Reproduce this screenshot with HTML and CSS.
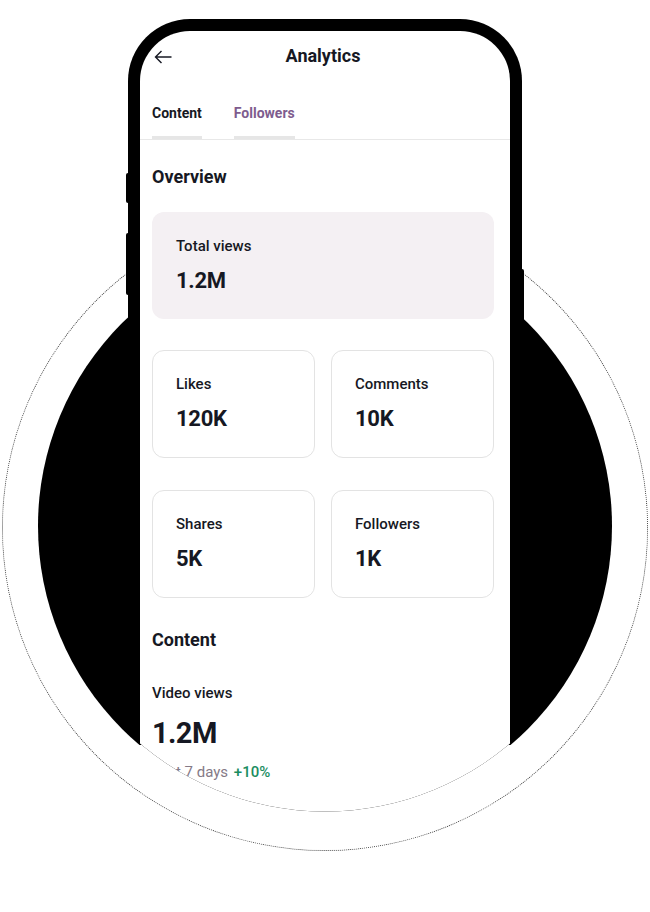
FILE: index.html
```html
<!DOCTYPE html>
<html lang="en">

<head>
    <meta charset="UTF-8">
    <meta name="viewport" content="width=device-width, initial-scale=1.0">
    <title>Analytics</title>
    <link rel="stylesheet" href="styles.css">
</head>

<body>
    <div class="stage">
        <div class="ring"></div>
        <div class="disc"></div>

        <div class="phone">
            <span class="key key-mute"></span>
            <span class="key key-volume"></span>
            <span class="key key-power"></span>

            <div class="screen">
                <div class="topbar">
                    <svg class="back" width="18" height="14" viewBox="0 0 18 14">
                        <path d="M17.5 7H1.5M7.5 1L1.5 7l6 6" fill="none" stroke="#161823" stroke-width="1.4" />
                    </svg>
                    <h1>Analytics</h1>
                </div>

                <div class="tabs">
                    <div class="tab active">Content</div>
                    <div class="tab">Followers</div>
                </div>

                <div class="body">
                    <h2>Overview</h2>

                    <div class="card card-main">
                        <div class="label">Total views</div>
                        <div class="value">1.2M</div>
                    </div>

                    <div class="grid">
                        <div class="card">
                            <div class="label">Likes</div>
                            <div class="value">120K</div>
                        </div>
                        <div class="card">
                            <div class="label">Comments</div>
                            <div class="value">10K</div>
                        </div>
                        <div class="card">
                            <div class="label">Shares</div>
                            <div class="value">5K</div>
                        </div>
                        <div class="card">
                            <div class="label">Followers</div>
                            <div class="value">1K</div>
                        </div>
                    </div>

                    <h2 class="section">Content</h2>
                    <div class="label views">Video views</div>
                    <div class="big">1.2M</div>
                    <div class="trend">Last 7 days <span class="up">+10%</span></div>
                </div>
            </div>
        </div>
    </div>
</body>
</html>
```

FILE: styles.css
```css
* {
    margin: 0;
    padding: 0;
    box-sizing: border-box;
}

body {
    background: #fff;
    font-family: Roboto, "Liberation Sans", sans-serif;
    color: #161823;
}

.stage {
    position: relative;
    width: 650px;
    height: 912px;
    padding: 19px 0 0 128px;
    overflow: hidden;
}

/* decorative circles behind the phone */
.ring {
    position: absolute;
    left: 2px;
    top: 205px;
    width: 646px;
    height: 646px;
    border: 1px dotted #444;
    border-radius: 50%;
}

.disc {
    position: absolute;
    left: 38px;
    top: 239px;
    width: 574px;
    height: 574px;
    border-radius: 50%;
    background: #000;
    clip-path: inset(0 0 68px 0);
}

/* phone: top half shown whole, lower half cut by the disc circle */
.phone {
    position: relative;
    width: 394px;
    height: 820px;
    padding: 12px;
    border-radius: 62px;
    background: #000;
    clip-path: path("M -100 -20 H 500 V 507 H 482.5 A 285.5 285.5 0 0 1 -88.5 507 H -100 Z");
}

.key {
    position: absolute;
    background: #000;
}

.key-mute {
    left: -2px;
    top: 154px;
    width: 4px;
    height: 30px;
    border-radius: 2px 0 0 2px;
}

.key-volume {
    left: -2px;
    top: 214px;
    width: 4px;
    height: 62px;
    border-radius: 2px 0 0 2px;
}

.key-power {
    right: -2px;
    top: 250px;
    width: 4px;
    height: 80px;
    border-radius: 0 2px 2px 0;
}

.screen {
    height: 100%;
    background: #fff;
    border-radius: 50px;
    overflow: hidden;
}

.topbar {
    position: relative;
    height: 50px;
    display: flex;
    align-items: center;
    justify-content: center;
}

.back {
    position: absolute;
    left: 14px;
    top: 19px;
}

.topbar h1 {
    font-size: 18px;
    font-weight: 700;
    line-height: 24px;
    margin-left: -4px;
}

.tabs {
    display: flex;
    gap: 32px;
    padding-left: 12px;
    border-bottom: 1px solid #e8e8e8;
}

.tab {
    padding-top: 23px;
    padding-bottom: 14px;
    font-size: 14px;
    font-weight: 700;
    line-height: 18px;
    color: #7e5c8e;
    border-bottom: 3px solid #e6e6e6;
}

.tab.active {
    color: #161823;
}

.body {
    padding: 0 16px 0 12px;
}

h2 {
    margin-top: 26px;
    font-size: 18px;
    font-weight: 700;
    line-height: 22px;
}

h2.section {
    margin-top: 31px;
}

.card {
    padding: 23px 23px 24px;
    border: 1px solid #e3e3e3;
    border-radius: 12px;
}

.card-main {
    margin-top: 24px;
    padding: 24px;
    border: 0;
    background: #f4f0f3;
}

.label {
    font-size: 15px;
    font-weight: 500;
    line-height: 20px;
}

.value {
    margin-top: 11px;
    font-size: 22px;
    font-weight: 700;
    line-height: 28px;
    letter-spacing: -0.3px;
}

.grid {
    margin-top: 31px;
    display: grid;
    grid-template-columns: 1fr 1fr;
    gap: 32px 16px;
}

.views {
    margin-top: 32px;
}

.big {
    margin-top: 12px;
    font-size: 29px;
    font-weight: 700;
    line-height: 36px;
    letter-spacing: -0.6px;
}

.trend {
    margin-top: 11px;
    font-size: 15px;
    line-height: 20px;
    color: #857a87;
}

.up {
    margin-left: 2px;
    color: #1a8d5f;
    font-weight: 500;
}
```
